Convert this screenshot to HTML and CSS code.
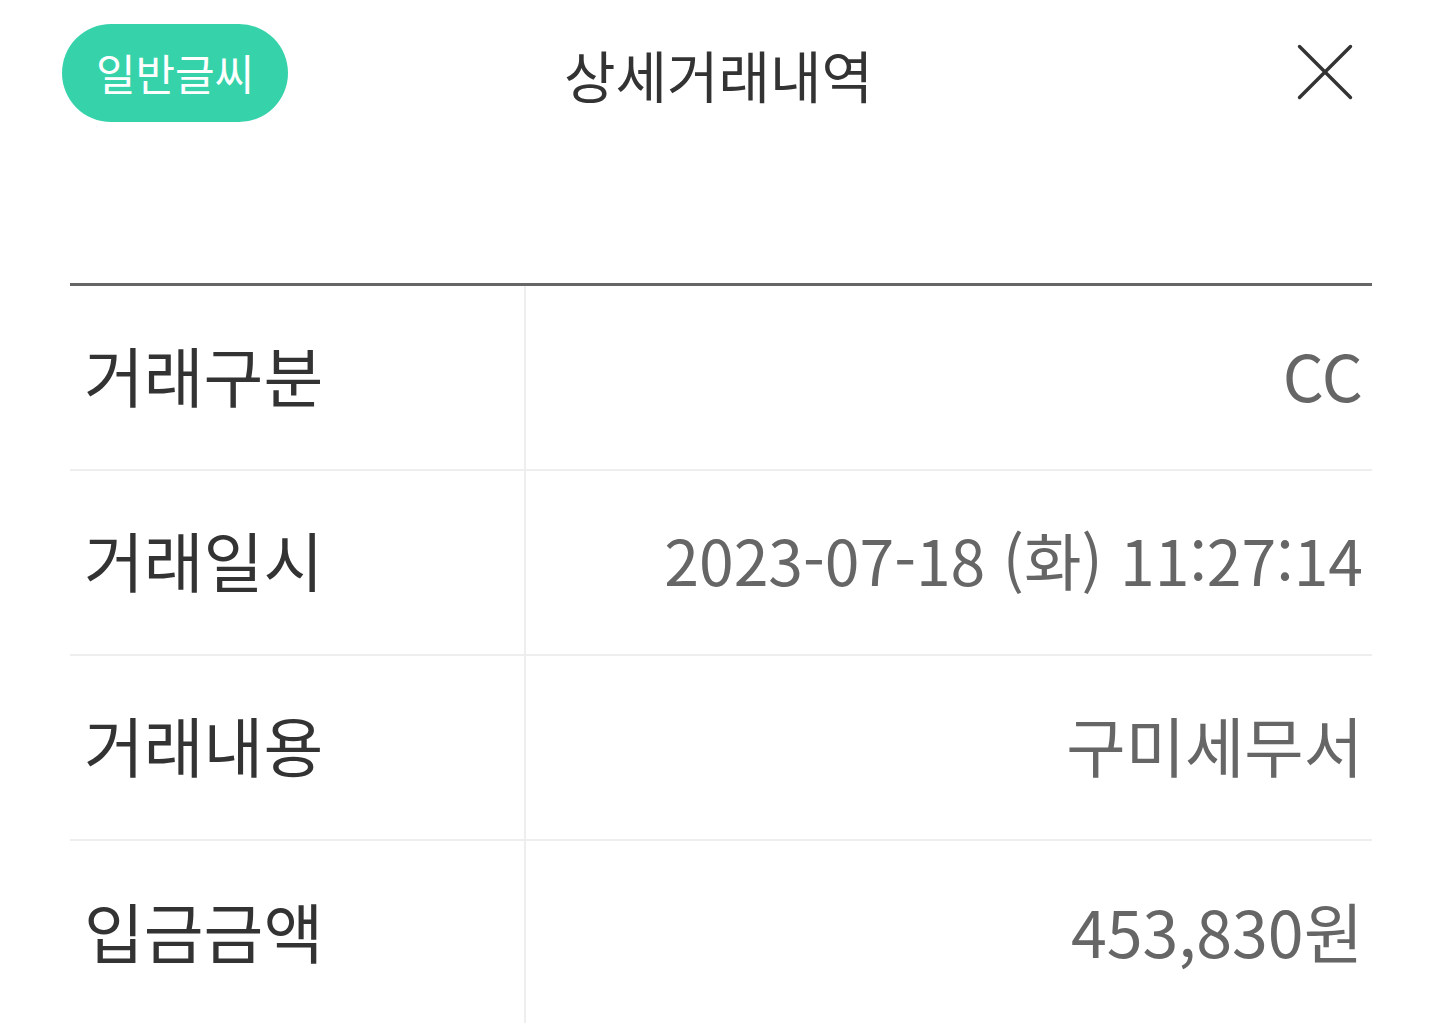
FILE: index.html
```html
<!DOCTYPE html>
<html lang="ko">
<head>
<meta charset="utf-8">
<title>상세거래내역</title>
<link rel="stylesheet" href="styles.css">
</head>
<body>
<div class="page">
  <header class="header">
    <div class="header-left">
      <button class="font-btn" type="button">일반글씨</button>
    </div>
    <h1 class="title">상세거래내역</h1>
    <div class="header-right">
      <button class="close-btn" type="button" aria-label="닫기">
        <svg width="56" height="56" viewBox="0 0 56 56" aria-hidden="true">
          <line x1="2.5" y1="2.5" x2="53.5" y2="53.5" stroke="#333" stroke-width="3.4" stroke-linecap="round"/>
          <line x1="53.5" y1="2.5" x2="2.5" y2="53.5" stroke="#333" stroke-width="3.4" stroke-linecap="round"/>
        </svg>
      </button>
    </div>
  </header>

  <div class="detail">
    <div class="row">
      <div class="label">거래구분</div>
      <div class="value">CC</div>
    </div>
    <div class="row">
      <div class="label">거래일시</div>
      <div class="value value--fit">2023-07-18 (화) 11:27:14</div>
    </div>
    <div class="row">
      <div class="label">거래내용</div>
      <div class="value">구미세무서</div>
    </div>
    <div class="row last">
      <div class="label">입금금액</div>
      <div class="value">453,830원</div>
    </div>
  </div>
</div>
</body>
</html>
```

FILE: styles.css
```css
* { box-sizing: border-box; }
html, body {
  margin: 0;
  padding: 0;
  background: #ffffff;
}
body {
  font-family: "Noto Sans CJK KR", "Noto Sans", sans-serif;
  color: #333333;
}
.page {
  width: 1440px;
  height: 1023px;
  overflow: hidden;
}
.header {
  display: grid;
  grid-template-columns: 1fr auto 1fr;
  align-items: center;
  padding: 24px 62px 0 62px;
  height: 122px;
}
.header-left { display: flex; align-items: center; }
.header-right { display: flex; justify-content: flex-end; padding-right: 25px; }
.font-btn {
  width: 226px;
  height: 98px;
  border: none;
  border-radius: 49px;
  background: #36d3ab;
  color: #ffffff;
  font-family: "Noto Sans CJK KR", sans-serif;
  font-size: 43px;
  line-height: 1;
  padding: 0 0 2px 0;
  display: flex;
  align-items: center;
  justify-content: center;
}
.title {
  margin: 0;
  font-size: 56px;
  font-weight: 400;
  color: #333333;
  line-height: 1;
  padding-top: 2px;
  padding-right: 3px;
}
.close-btn {
  border: none;
  background: none;
  padding: 0;
  width: 56px;
  height: 56px;
  display: block;
  margin-top: -3px;
}
.close-btn svg { display: block; }
.detail {
  margin: 161px 68px 0 70px;
  border-top: 3px solid #666666;
}
.row {
  display: flex;
  height: 185px;
  border-bottom: 2px solid #eeeeee;
}
.row.last { border-bottom: none; }
.label {
  width: 454px;
  flex: none;
  display: flex;
  align-items: center;
  padding: 0 0 6px 14px;
  font-size: 65px;
  color: #333333;
  line-height: 1;
}
.value {
  flex: 1;
  border-left: 2px solid #eeeeee;
  display: flex;
  align-items: center;
  justify-content: flex-end;
  padding: 0 9px 6px 0;
  font-size: 64.5px;
  color: #666666;
  line-height: 1;
}
.value--fit {
  font-size: 62.5px;
}
```
